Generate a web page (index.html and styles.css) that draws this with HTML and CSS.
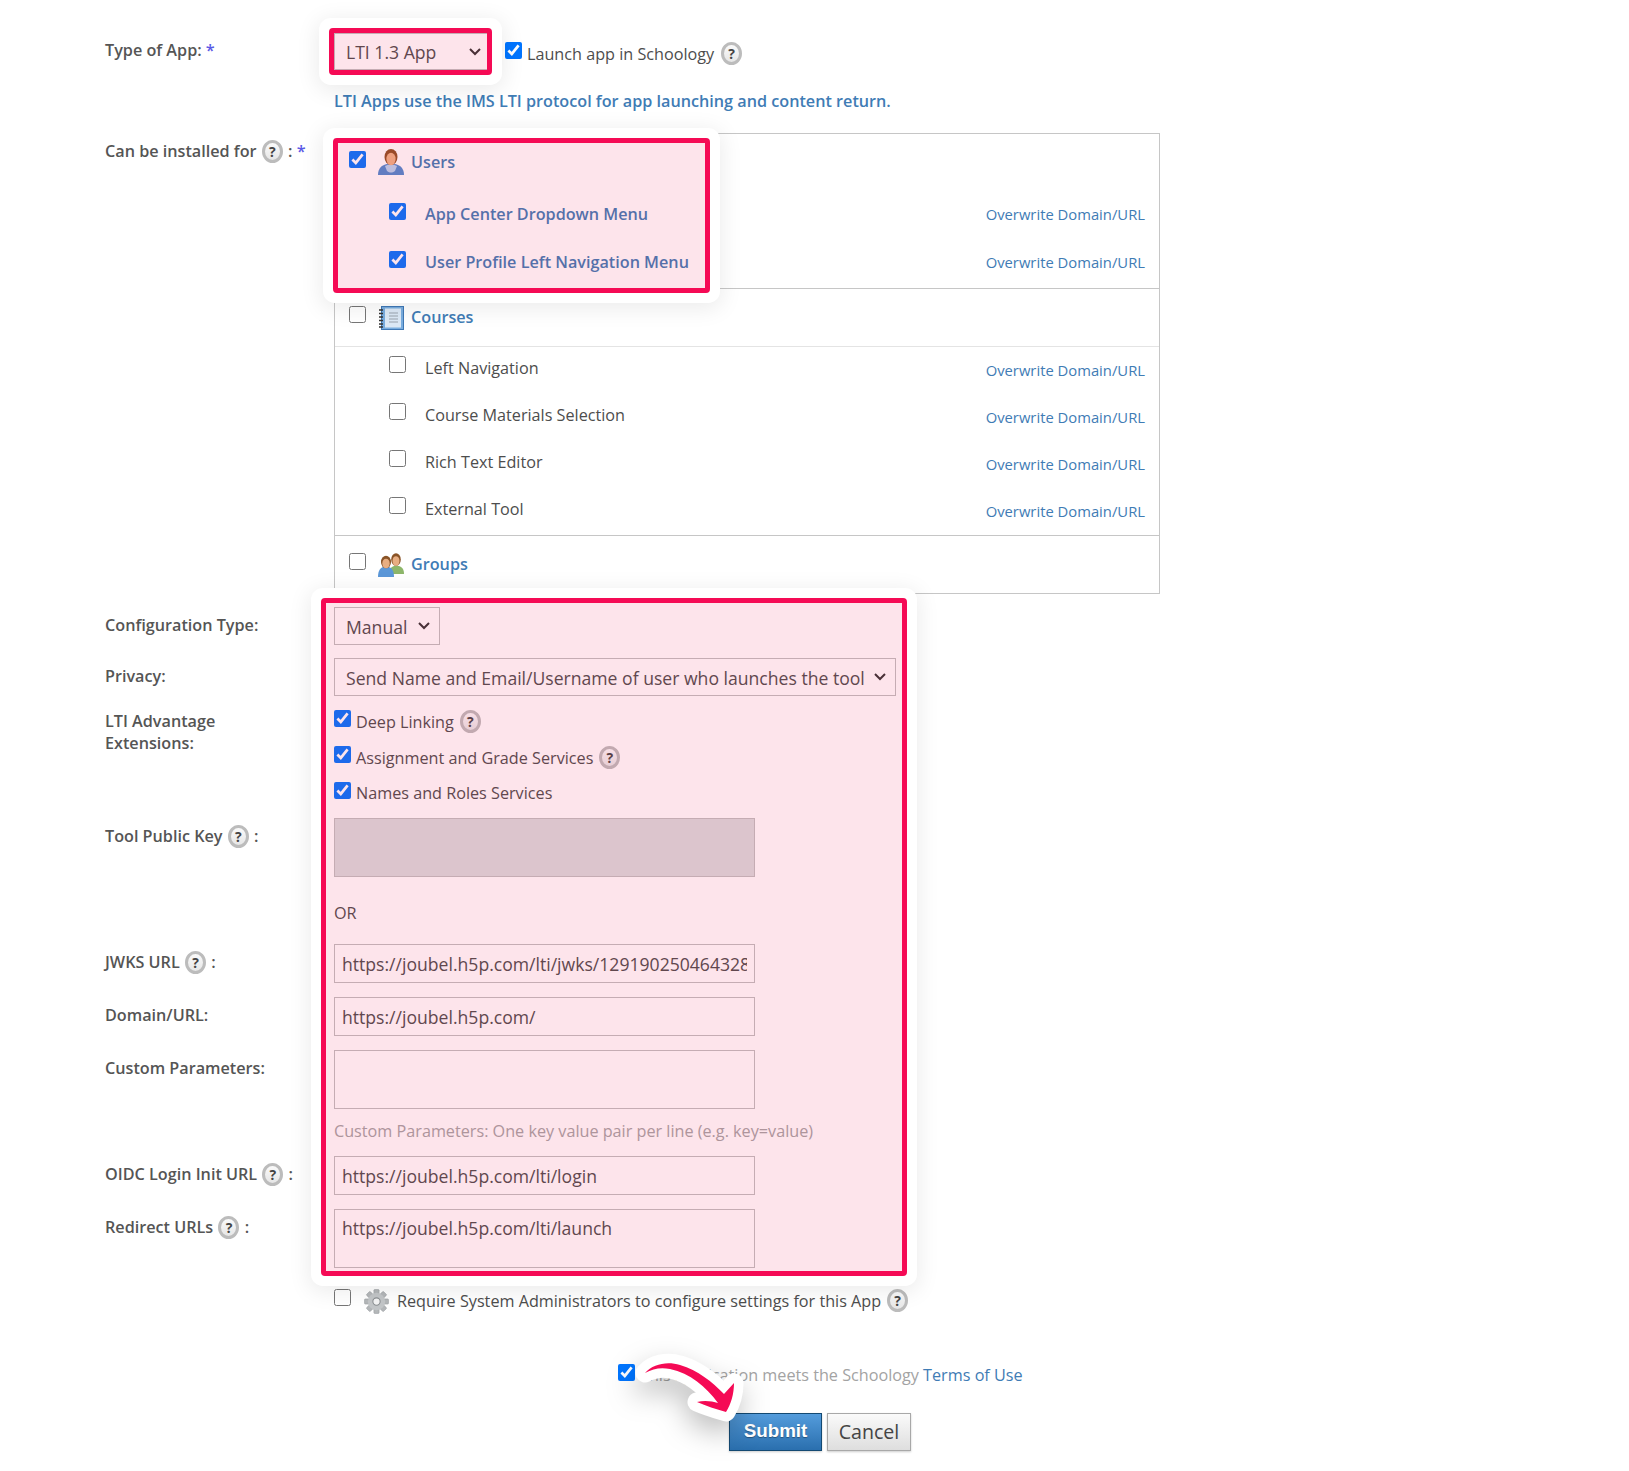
FILE: index.html
```html
<!DOCTYPE html>
<html lang="en">
<head>
    <meta charset="UTF-8">
    <meta name="viewport" content="width=device-width, initial-scale=1.0">
    <title>Add App</title>
    <link rel="stylesheet" href="styles.css">
</head>
<body>

<form class="app-form">

    <div class="form-row row-type">
        <label class="form-label">Type of App: <span class="req">*</span></label>
        <div class="form-field">
            <div class="inline-line">
                <select class="type-select"><option>LTI 1.3 App</option></select>
                <input type="checkbox" class="launch-check" checked>
                <span class="launch-text">Launch app in Schoology</span>
                <span class="help">?</span>
            </div>
            <div class="type-desc">LTI Apps use the IMS LTI protocol for app launching and content return.</div>
        </div>
    </div>

    <div class="form-row row-install">
        <label class="form-label">Can be installed for <span class="help">?</span> : <span class="req">*</span></label>
        <div class="install-box">
            <div class="install-group group-users">
                <div class="group-head">
                    <input type="checkbox" checked>
                    <svg class="realm-icon icon-user" viewBox="0 0 26 27">
                        <path d="M0 26c0-7 4-10 9-11h8c5 1 9 4 9 11z" fill="#4f8ad0"/>
                        <path d="M7 17c2-1 3-1 4-2h4c1 1 2 1 4 2l-2 5c-3 2-5 2-8 0z" fill="#b7d3ef"/>
                        <ellipse cx="13" cy="8" rx="6.500" ry="8" fill="#8f4f22"/>
                        <ellipse cx="13" cy="10" rx="4.600" ry="6.200" fill="#eeb184"/>
                    </svg>
                    <span class="group-title">Users</span>
                </div>
                <div class="realm-line">
                    <input type="checkbox" checked>
                    <span class="realm-title on">App Center Dropdown Menu</span>
                    <a class="overwrite">Overwrite Domain/URL</a>
                </div>
                <div class="realm-line">
                    <input type="checkbox" checked>
                    <span class="realm-title on">User Profile Left Navigation Menu</span>
                    <a class="overwrite">Overwrite Domain/URL</a>
                </div>
            </div>
            <div class="install-group group-courses">
                <div class="group-head head-ruled">
                    <input type="checkbox">
                    <svg class="realm-icon" viewBox="0 0 26 24">
                        <rect x="3.500" y="0.500" width="22" height="23" fill="#79addf" stroke="#3f78b5"/>
                        <rect x="7" y="2.500" width="16" height="19" fill="#dce9f6"/>
                        <path d="M11 7h9M11 10h9M11 13h9M11 16h9" stroke="#9aa3ad" stroke-width="1.200"/>
                        <path d="M1 4h4M1 7.500h4M1 11h4M1 14.500h4M1 18h4M1 21h4" stroke="#333" stroke-width="1.300"/>
                    </svg>
                    <span class="group-title">Courses</span>
                </div>
                <div class="realm-line">
                    <input type="checkbox">
                    <span class="realm-title">Left Navigation</span>
                    <a class="overwrite">Overwrite Domain/URL</a>
                </div>
                <div class="realm-line">
                    <input type="checkbox">
                    <span class="realm-title">Course Materials Selection</span>
                    <a class="overwrite">Overwrite Domain/URL</a>
                </div>
                <div class="realm-line">
                    <input type="checkbox">
                    <span class="realm-title">Rich Text Editor</span>
                    <a class="overwrite">Overwrite Domain/URL</a>
                </div>
                <div class="realm-line">
                    <input type="checkbox">
                    <span class="realm-title">External Tool</span>
                    <a class="overwrite">Overwrite Domain/URL</a>
                </div>
            </div>
            <div class="install-group group-last">
                <div class="group-head">
                    <input type="checkbox">
                    <svg class="realm-icon" viewBox="0 0 26 24">
                        <path d="M11 21c0-5 2-7 5-8h5c3 1 5 3 5 8z" fill="#8db66a"/>
                        <ellipse cx="18" cy="6.500" rx="4.800" ry="6.300" fill="#8a5427"/>
                        <ellipse cx="18" cy="8" rx="3.500" ry="4.800" fill="#e8ae82"/>
                        <path d="M0 24c0-6 2-9 5-10h6c3 1 5 4 5 10z" fill="#5b97d8"/>
                        <ellipse cx="8" cy="9" rx="5" ry="6.300" fill="#8a5427"/>
                        <ellipse cx="8" cy="10.500" rx="3.700" ry="4.800" fill="#e8ae82"/>
                    </svg>
                    <span class="group-title">Groups</span>
                </div>
            </div>
        </div>
    </div>

    <div class="form-row row-config">
        <label class="form-label">Configuration Type:</label>
        <select class="plain-select manual-select"><option>Manual</option></select>
    </div>

    <div class="form-row row-privacy">
        <label class="form-label">Privacy:</label>
        <select class="plain-select privacy-select"><option>Send Name and Email/Username of user who launches the tool</option></select>
    </div>

    <div class="form-row row-extensions">
        <label class="form-label">LTI Advantage<br>Extensions:</label>
        <div class="form-field">
            <div class="check-line"><input type="checkbox" checked><span>Deep Linking</span><span class="help">?</span></div>
            <div class="check-line"><input type="checkbox" checked><span>Assignment and Grade Services</span><span class="help">?</span></div>
            <div class="check-line"><input type="checkbox" checked><span>Names and Roles Services</span></div>
        </div>
    </div>

    <div class="form-row row-key">
        <label class="form-label">Tool Public Key <span class="help">?</span> :</label>
        <div class="form-field">
            <div class="key-area"></div>
            <div class="or-text">OR</div>
        </div>
    </div>

    <div class="form-row row-jwks">
        <label class="form-label">JWKS URL <span class="help">?</span> :</label>
        <input type="text" class="text-input" value="https://joubel.h5p.com/lti/jwks/1291902504643288">
    </div>

    <div class="form-row row-text">
        <label class="form-label">Domain/URL:</label>
        <input type="text" class="text-input" value="https://joubel.h5p.com/">
    </div>

    <div class="form-row row-text">
        <label class="form-label">Custom Parameters:</label>
        <div class="form-field">
            <textarea class="text-input area-input"></textarea>
            <div class="hint">Custom Parameters: One key value pair per line (e.g. key=value)</div>
        </div>
    </div>

    <div class="form-row row-text">
        <label class="form-label">OIDC Login Init URL <span class="help">?</span> :</label>
        <input type="text" class="text-input" value="https://joubel.h5p.com/lti/login">
    </div>

    <div class="form-row row-text">
        <label class="form-label">Redirect URLs <span class="help">?</span> :</label>
        <textarea class="text-input area-input">https://joubel.h5p.com/lti/launch</textarea>
    </div>

    <div class="form-row row-admin">
        <span></span>
        <div class="admin-line">
            <input type="checkbox">
            <svg class="gear-icon" viewBox="0 0 24 24">
                <g fill="#b4b7b9" stroke="#95999c" stroke-width=".5">
                    <rect x="9.500" y="0.500" width="5" height="5" rx=".8"/>
                    <rect x="9.500" y="0.500" width="5" height="5" rx=".8" transform="rotate(45 12 12)"/>
                    <rect x="9.500" y="0.500" width="5" height="5" rx=".8" transform="rotate(90 12 12)"/>
                    <rect x="9.500" y="0.500" width="5" height="5" rx=".8" transform="rotate(135 12 12)"/>
                    <rect x="9.500" y="0.500" width="5" height="5" rx=".8" transform="rotate(180 12 12)"/>
                    <rect x="9.500" y="0.500" width="5" height="5" rx=".8" transform="rotate(225 12 12)"/>
                    <rect x="9.500" y="0.500" width="5" height="5" rx=".8" transform="rotate(270 12 12)"/>
                    <rect x="9.500" y="0.500" width="5" height="5" rx=".8" transform="rotate(315 12 12)"/>
                </g>
                <circle cx="12" cy="12" r="8.300" fill="#c3c6c8"/>
                <circle cx="12" cy="12" r="3.500" fill="#f4f4f4" stroke="#8a8e91"/>
            </svg>
            <span>Require System Administrators to configure settings for this App</span>
            <span class="help">?</span>
        </div>
    </div>

    <div class="terms-line">
        <input type="checkbox" checked>
        <span>This application meets the Schoology <a class="terms-link">Terms of Use</a></span>
    </div>

    <div class="button-line">
        <button type="button" class="btn-submit">Submit</button>
        <button type="button" class="btn-cancel">Cancel</button>
    </div>
</form>

<!-- annotations drawn on top of the screenshot -->
<div class="mark mark-type"></div>
<div class="mark mark-install"></div>
<div class="mark mark-config"></div>

<svg class="arrow-sticker" viewBox="0 0 130 90">
    <path class="arrow-back" d="M25 33C33 24 47 21 60 25C78 30 92 42 104 54L114 43C114 54 111 64 106 72C96 69 86 66 77 62C84 60 92 61 98 63C86 47 70 33 50 29C40 27 33 29 25 33Z"/>
    <path class="arrow-front" d="M25 33C33 24 47 21 60 25C78 30 92 42 104 54L114 43C114 54 111 64 106 72C96 69 86 66 77 62C84 60 92 61 98 63C86 47 70 33 50 29C40 27 33 29 25 33Z"/>
</svg>

</body>
</html>
```
FILE: styles.css
```css
body {
    margin: 0;
    background: #fff;
    font-family: "Open Sans", sans-serif;
    font-size: 16.2px;
    color: #4d4d4d;
    position: relative;
    height: 1471px;
    overflow: hidden;
}

.app-form {
    padding: 33px 0 0 105px;
}

.form-row {
    display: grid;
    grid-template-columns: 229px 1fr;
    align-items: start;
}

.form-label {
    font-weight: 600;
    color: #555;
    line-height: 21px;
    padding-top: 8px;
}

.req {
    color: #5a5ae6;
}

input[type="checkbox"] {
    width: 17px;
    height: 17px;
    margin: 0;
    flex: none;
}

.help {
    display: inline-block;
    box-sizing: border-box;
    width: 21px;
    height: 23px;
    border: 3px solid #bcbcbc;
    border-radius: 50%;
    background: linear-gradient(#fafafa, #e6e6e6);
    font-size: 14px;
    font-weight: 700;
    line-height: 17px;
    text-align: center;
    color: #444;
    vertical-align: middle;
    flex: none;
}

.form-label .help {
    margin: -3px 1px -1px;
}

/* type of app */
.row-type .form-label {
    padding-top: 7px;
}

.inline-line {
    display: flex;
    align-items: flex-start;
}

.type-select, .plain-select {
    box-sizing: border-box;
    appearance: none;
    border: 1px solid #c0c0c0;
    border-radius: 0;
    background: #fff url("data:image/svg+xml,%3Csvg xmlns='http://www.w3.org/2000/svg' width='12' height='8'%3E%3Cpath d='M1 1l5 5 5-5' fill='none' stroke='%23333' stroke-width='2'/%3E%3C/svg%3E") no-repeat right 9px center;
    font-family: "Open Sans", sans-serif;
    font-size: 17.6px;
    color: #4d4d4d;
    padding: 0 26px 0 11px;
}

.type-select {
    width: 154px;
    height: 37px;
    background-position: right 6px center;
}

.launch-check {
    margin: 9px 0 0 17px !important;
}

.launch-text {
    margin: 10px 7px 0 5px;
    line-height: 22px;
}

.inline-line .help {
    margin-top: 9px;
}

.type-desc {
    margin-top: 20px;
    font-weight: 600;
    color: #3f7cb5;
    line-height: 22px;
}

/* install box */
.row-install {
    margin-top: 21px;
}

.install-box {
    box-sizing: border-box;
    width: 826px;
    height: 461px;
    border: 1px solid #c6c6c6;
}

.install-group {
    border-bottom: 1px solid #c6c6c6;
}

.group-last {
    border-bottom: 0;
}

.group-head {
    display: flex;
    align-items: flex-start;
    padding: 17px 0 0 14px;
}

.realm-icon {
    width: 26px;
    height: 24px;
    margin: 0 7px 0 12px;
}

.icon-user {
    height: 27px;
    margin-top: -2px;
}

.group-title {
    font-weight: 600;
    color: #3f7cb5;
    line-height: 24px;
    margin-top: -1px;
}

.realm-line {
    display: flex;
    align-items: flex-start;
    height: 47px;
    padding: 0 14px 0 54px;
}

.realm-line input {
    margin-top: 9px;
}

.realm-title {
    margin: 9px 0 0 19px;
    line-height: 24px;
}

.realm-title.on {
    font-weight: 600;
    color: #3f7cb5;
}

.overwrite {
    margin: 11px 0 0 auto;
    font-size: 14.8px;
    line-height: 24px;
    color: #3f7cb5;
}

/* users rows are spaced a little wider than the courses ones */
.group-users {
    box-sizing: border-box;
    height: 155px;
}

.group-users .group-head {
    height: 45px;
}

.group-users .realm-line {
    height: 48px;
}

.group-users .realm-line input {
    margin-top: 7px;
}

.group-users .realm-title, .group-users .overwrite {
    margin-top: 6px;
}

.head-ruled {
    height: 40px;
    border-bottom: 1px solid #e4e4e4;
}

/* config rows */
.row-config, .row-privacy, .row-extensions {
    margin-top: 13px;
}

.plain-select {
    height: 38px;
    padding-top: 2px;
    justify-self: start;
}

.manual-select {
    width: 106px;
}

.privacy-select {
    width: 562px;
}

.row-extensions .form-label {
    padding-top: 1px;
    line-height: 22px;
}

.check-line {
    display: flex;
    align-items: flex-start;
    height: 36px;
}

.check-line input {
    margin-top: 1px;
}

.check-line span:not(.help) {
    margin: 2px 6px 0 5px;
    line-height: 22px;
}

.check-line:last-child span:not(.help) {
    margin-top: 1px;
}

.check-line .help {
    margin-top: 1px;
}

.row-key {
    margin-top: 1px;
}

.key-area {
    box-sizing: border-box;
    width: 421px;
    height: 59px;
    background: #dadcdd;
    border: 1px solid #c0c0c0;
}

.or-text {
    margin-top: 25px;
    line-height: 22px;
}

.text-input {
    box-sizing: border-box;
    display: block;
    width: 421px;
    height: 39px;
    border: 1px solid #c0c0c0;
    padding: 0 7px;
    background: #fff;
    font-family: "Open Sans", sans-serif;
    font-size: 17.6px;
    color: #4d4d4d;
    outline: 0;
}

.area-input {
    height: 59px;
    resize: none;
    padding: 6px 7px;
    line-height: 24px;
}

.row-jwks {
    margin-top: 20px;
}

.row-text {
    margin-top: 14px;
}

.hint {
    margin-top: 11px;
    line-height: 22px;
    color: #a5a5a5;
}

.admin-line {
    display: flex;
    align-items: flex-start;
    margin-top: 21px;
}

.admin-line span:not(.help) {
    margin: 1px 6px 0 8px;
    line-height: 22px;
}

.gear-icon {
    width: 25px;
    height: 25px;
    margin-left: 13px;
}

.terms-line {
    display: flex;
    align-items: flex-start;
    margin: 50px 0 0 513px;
}

.terms-line span {
    margin-left: 5px;
    color: #a3a3a3;
    line-height: 22px;
}

.terms-link {
    color: #3f7cb5;
}

.button-line {
    display: flex;
    gap: 5px;
    margin: 27px 0 0 624px;
}

.btn-submit, .btn-cancel {
    height: 38px;
    padding: 0 0 2px;
    box-shadow: 0 1px 2px rgba(0, 0, 0, 0.2);
}

.btn-submit {
    width: 93px;
    border: 1px solid #144a73;
    background: linear-gradient(#549cdc, #2a6fae);
    color: #fff;
    font-family: "Liberation Sans", sans-serif;
    font-size: 18.800px;
    font-weight: 700;
    text-shadow: 0 1px 1px rgba(0, 0, 0, 0.35);
}

.btn-cancel {
    width: 84px;
    border: 1px solid #a8a8a8;
    background: linear-gradient(#fafafa, #dedede);
    color: #444;
    font-family: "Open Sans", sans-serif;
    font-size: 19.600px;
}

/* pink highlight boxes */
.mark {
    position: absolute;
    box-sizing: border-box;
    border: 5px solid #f50a55;
    border-radius: 4px;
    background: rgba(240, 30, 90, 0.12);
    box-shadow: 0 0 0 10px #fff, 0 4px 22px 12px rgba(0, 0, 0, 0.08);
}

.mark-type {
    left: 329px;
    top: 28px;
    width: 163px;
    height: 47px;
}

.mark-install {
    left: 333px;
    top: 138px;
    width: 377px;
    height: 155px;
}

.mark-config {
    left: 321px;
    top: 598px;
    width: 586px;
    height: 678px;
}

.arrow-sticker {
    position: absolute;
    left: 620px;
    top: 1340px;
    width: 130px;
    height: 90px;
    overflow: visible;
    filter: drop-shadow(-2px 12px 14px rgba(0, 0, 0, 0.25));
}

.arrow-back {
    fill: #fff;
    stroke: #fff;
    stroke-width: 19;
    stroke-linejoin: round;
}

.arrow-front {
    fill: #f50a55;
}
```
